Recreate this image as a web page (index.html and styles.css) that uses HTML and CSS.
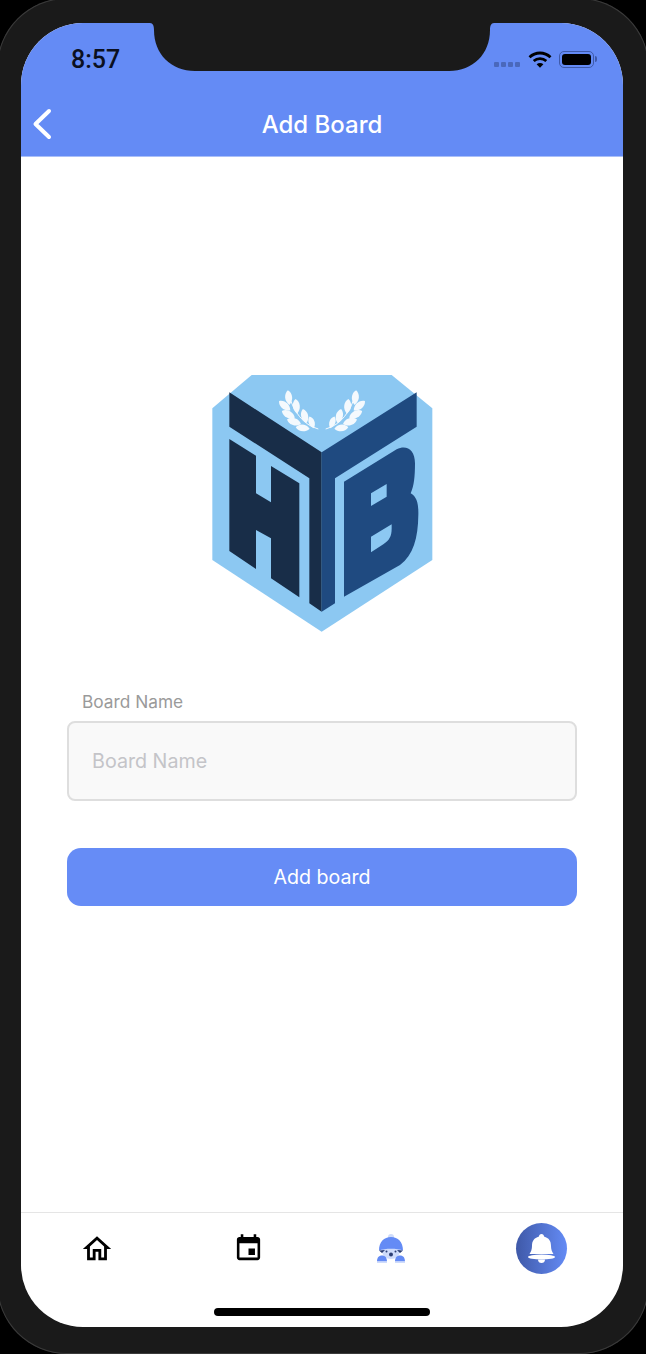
FILE: index.html

```html
<!DOCTYPE html>
<html lang="en">
<head>
    <meta charset="UTF-8">
    <meta name="viewport" content="width=device-width, initial-scale=1.0">
    <title>Add Board</title>
    <link rel="stylesheet" href="styles.css">
</head>
<body>
    <div class="phone">
        <div class="screen">
            <svg class="notch" width="344" height="48" viewBox="0 0 344 48">
                <path d="M0 0C3 0 4 3 4 7C4 31 21 48 45 48H299C323 48 340 31 340 7C340 3 341 0 344 0Z"/>
            </svg>

            <header class="header">
                <div class="status">
                    <span class="time">8:57</span>
                    <div class="status-icons">
                        <div class="signal"><i></i><i></i><i></i><i></i></div>
                        <svg class="wifi" width="24" height="17" viewBox="0 0 24 17">
                            <path d="M1.5 6.2C7.5 .6 16.500 .6 22.500 6.200" fill="none" stroke="#000" stroke-width="2.800"/>
                            <path d="M5.700 10C9.300 6.800 14.700 6.800 18.300 10" fill="none" stroke="#000" stroke-width="2.800"/>
                            <path d="M8.600 13.200L12 16.800L15.400 13.200C13.400 11.600 10.600 11.600 8.600 13.200Z"/>
                        </svg>
                        <div class="battery"><div class="battery-fill"></div></div>
                        <div class="battery-cap"></div>
                    </div>
                </div>
                <div class="nav">
                    <svg class="back" width="22" height="32" viewBox="0 0 22 32">
                        <path d="M18 3L4.500 16L18 29" fill="none" stroke="#fff" stroke-width="4" stroke-linecap="round" stroke-linejoin="round"/>
                    </svg>
                    <h1>Add Board</h1>
                </div>
            </header>

            <main class="content">
                <svg class="logo" width="245" height="275" viewBox="0 0 735 825">
                    <defs>
                        <path id="leaf" d="M0 -22C14 -12 14 10 0 22C-14 10 -14 -12 0 -22Z"/>
                        <g id="laurel" fill="#f4f9fd">
                            <path d="M355 192C310 180 280 140 266 88" fill="none" stroke="#f4f9fd" stroke-width="3"/>
                            <use href="#leaf" transform="translate(266 98) rotate(-6)"/>
                            <use href="#leaf" transform="translate(254 122) rotate(-50)"/>
                            <use href="#leaf" transform="translate(289 124) rotate(-6)"/>
                            <use href="#leaf" transform="translate(265 148) rotate(-62)"/>
                            <use href="#leaf" transform="translate(314 153) rotate(-14)"/>
                            <use href="#leaf" transform="translate(282 170) rotate(-72)"/>
                            <use href="#leaf" transform="translate(335 172) rotate(-20) scale(.85)"/>
                            <use href="#leaf" transform="translate(308 189) rotate(-84) scale(.95)"/>
                        </g>
                    </defs>
                    <path d="M155 30H575L697 130V585L365 800L37 585V130Z" fill="#8cc8f2"/>
                    <path d="M88 82L365 262V740L328 715V340L88 185Z" fill="#182d48"/>
                    <path d="M88 222L168 272V385L213 412V303L298 355V697L213 640V520L168 495V612L88 558Z" fill="#182d48"/>
                    <path d="M650 82V185L405 340V715L365 740V262Z" fill="#1f4a80"/>
                    <path fill-rule="evenodd" fill="#1f4a80" d="M432 350L590 253C620 238 645 255 645 295C645 335 642 365 632 385C650 395 656 415 655 450C654 520 640 570 600 600L432 695ZM513 385V423L560 395V357ZM513 515V562L550 538C568 526 575 515 575 490V478Z"/>
                    <use href="#laurel"/>
                    <use href="#laurel" transform="translate(732 0) scale(-1 1)"/>
                </svg>

                <form class="board-form">
                    <label for="board-name">Board Name</label>
                    <input type="text" id="board-name" placeholder="Board Name">
                    <button type="button">Add board</button>
                </form>
            </main>

            <footer class="tabbar">
                <nav class="tabs">
                    <div class="tab">
                        <svg width="34" height="34" viewBox="0 0 24 24"><path d="M12 5.690l5 4.500V18h-2v-6H9v6H7v-7.810l5-4.500M12 3L2 12h3v8h6v-6h2v6h6v-8h3L12 3z"/></svg>
                    </div>
                    <div class="tab">
                        <svg width="31" height="31" viewBox="0 0 24 24"><path d="M17 12h-5v5h5v-5zM16 1v2H8V1H6v2H5c-1.110 0-1.990.9-1.990 2L3 19c0 1.100.89 2 2 2h14c1.100 0 2-.9 2-2V5c0-1.100-.9-2-2-2h-1V1h-2zm3 18H5V8h14v11z"/></svg>
                    </div>
                    <div class="tab">
                        <svg width="28" height="29" viewBox="0 0 28 29">
                            <circle cx="14" cy="3" r="3" fill="#cfdcfb"/>
                            <ellipse cx="14" cy="17" rx="9" ry="8" fill="#cfdcfb"/>
                            <path d="M2 16.500C2 8 7 3 14 3S26 8 26 16.500C20 14 8 14 2 16.500Z" fill="#648bf5"/>
                            <path d="M2 16.500L5 19L8 16ZM26 16.500L23 19L20 16Z" fill="#2c3f74"/>
                            <circle cx="14" cy="20.500" r="2" fill="#2c3f74"/>
                            <circle cx="9.500" cy="17.500" r="1" fill="#2c3f74"/>
                            <circle cx="18.500" cy="17.500" r="1" fill="#2c3f74"/>
                            <path d="M0 27.500C0 23 2.500 21.500 5 21.500S10 23 10 27.500ZM18 27.500C18 23 20.500 21.500 23 21.500S28 23 28 27.500Z" fill="#648bf5"/>
                            <path d="M0 27.500H10V29H0ZM18 27.500H28V29H18Z" fill="#cfdcfb"/>
                        </svg>
                    </div>
                    <div class="tab">
                        <div class="bell">
                            <svg width="51" height="51" viewBox="0 0 51 51">
                                <path d="M25.500 11C27 11 28 12 28 13.500C33 15 35 18 35 23C35 26 36 29 37.500 31H13.500C15 29 16 26 16 23C16 18 18 15 23 13.500C23 12 24 11 25.500 11Z" fill="#fff"/>
                                <ellipse cx="25.500" cy="34" rx="13.500" ry="2.500" fill="#fff"/>
                                <path d="M22 36.500H29C29 39 27.500 40 25.500 40S22 39 22 36.500Z" fill="#fff"/>
                            </svg>
                        </div>
                    </div>
                </nav>
                <div class="home-indicator"></div>
            </footer>
        </div>
    </div>
</body>
</html>
```

FILE: styles.css

```css
html, body {
    margin: 0;
    padding: 0;
    height: 1354px;
    overflow: hidden;
    background-color: #000;
}
.phone {
    margin: -2px -3px 0;
    height: 1356px;
    padding: 25px 26px 27px 24px;
    background-color: #1a1a1a;
    border-radius: 70px;
    box-shadow: inset 0 0 0 1px #3a3a3a;
    box-sizing: border-box;
}
.screen {
    position: relative;
    display: flex;
    flex-direction: column;
    height: 100%;
    background-color: #fff;
    border-radius: 62px;
    overflow: hidden;
}
.notch {
    position: absolute;
    top: 0;
    left: 129px;
    fill: #1a1a1a;
}
.header {
    height: 133px;
    background-color: #648bf5;
    border-bottom: 1px solid #a9bff9;
}
.status {
    display: flex;
    justify-content: space-between;
    align-items: center;
    height: 28px;
    padding: 22px 26px 0 50px;
}
.time {
    font-family: Roboto, sans-serif;
    font-size: 25px;
    font-weight: 500;
    color: #0b1020;
}
.status-icons {
    display: flex;
    align-items: center;
}
.signal {
    display: flex;
    gap: 2px;
    margin-top: 10px;
    margin-right: 8px;
}
.signal i {
    width: 5px;
    height: 5px;
    background-color: #4a68bb;
    border-radius: 1px;
}
.battery {
    width: 35px;
    height: 17px;
    margin-left: 7px;
    padding: 2px;
    border: 1px solid #3f5aa8;
    border-radius: 5px;
    box-sizing: border-box;
}
.battery-fill {
    height: 100%;
    background-color: #000;
    border-radius: 3px;
}
.battery-cap {
    width: 2px;
    height: 6px;
    margin-left: 1px;
    background-color: #3f5aa8;
    border-radius: 0 2px 2px 0;
}
.nav {
    position: relative;
    display: flex;
    justify-content: center;
    align-items: center;
    height: 34px;
    margin-top: 34px;
}
.nav h1 {
    margin: 0;
    font-family: Inter, sans-serif;
    font-size: 24px;
    font-weight: 500;
    color: #fff;
}
.back {
    position: absolute;
    left: 10px;
    top: 1px;
}
.content {
    flex: 1;
    display: flex;
    flex-direction: column;
    align-items: center;
    padding-top: 208px;
}
.logo {
    display: block;
    filter: blur(.4px);
}
.board-form {
    width: 510px;
    margin-top: 52px;
}
label {
    display: block;
    margin-bottom: 9px;
    padding-left: 15px;
    font-family: Inter, sans-serif;
    font-size: 17.3px;
    line-height: 20px;
    color: #9a9a9a;
}
input {
    display: block;
    width: 100%;
    height: 80px;
    padding: 0 23px;
    background-color: #f9f9f9;
    border: 2px solid #dedede;
    border-radius: 8px;
    font-family: Inter, sans-serif;
    font-size: 19.7px;
    box-sizing: border-box;
}
input::placeholder {
    color: #c4c4c8;
}
button {
    display: block;
    width: 100%;
    height: 58px;
    margin-top: 47px;
    background-color: #668cf6;
    color: #fff;
    border: none;
    border-radius: 14px;
    font-family: Inter, sans-serif;
    font-size: 19.6px;
}
.tabbar {
    height: 114px;
    border-top: 1px solid #e5e5e5;
}
.tabs {
    display: grid;
    grid-template-columns: 152px 150px 136px 164px;
    height: 70px;
    padding-top: 10px;
}
.tab {
    display: flex;
    justify-content: center;
    align-items: center;
    height: 51px;
}
.bell {
    width: 51px;
    height: 51px;
    background: linear-gradient(90deg, #3f59a8, #648bf5);
    border-radius: 50%;
}
.bell svg {
    display: block;
}
.home-indicator {
    width: 216px;
    height: 8px;
    margin: 15px auto 0;
    background-color: #000;
    border-radius: 4px;
}
```
